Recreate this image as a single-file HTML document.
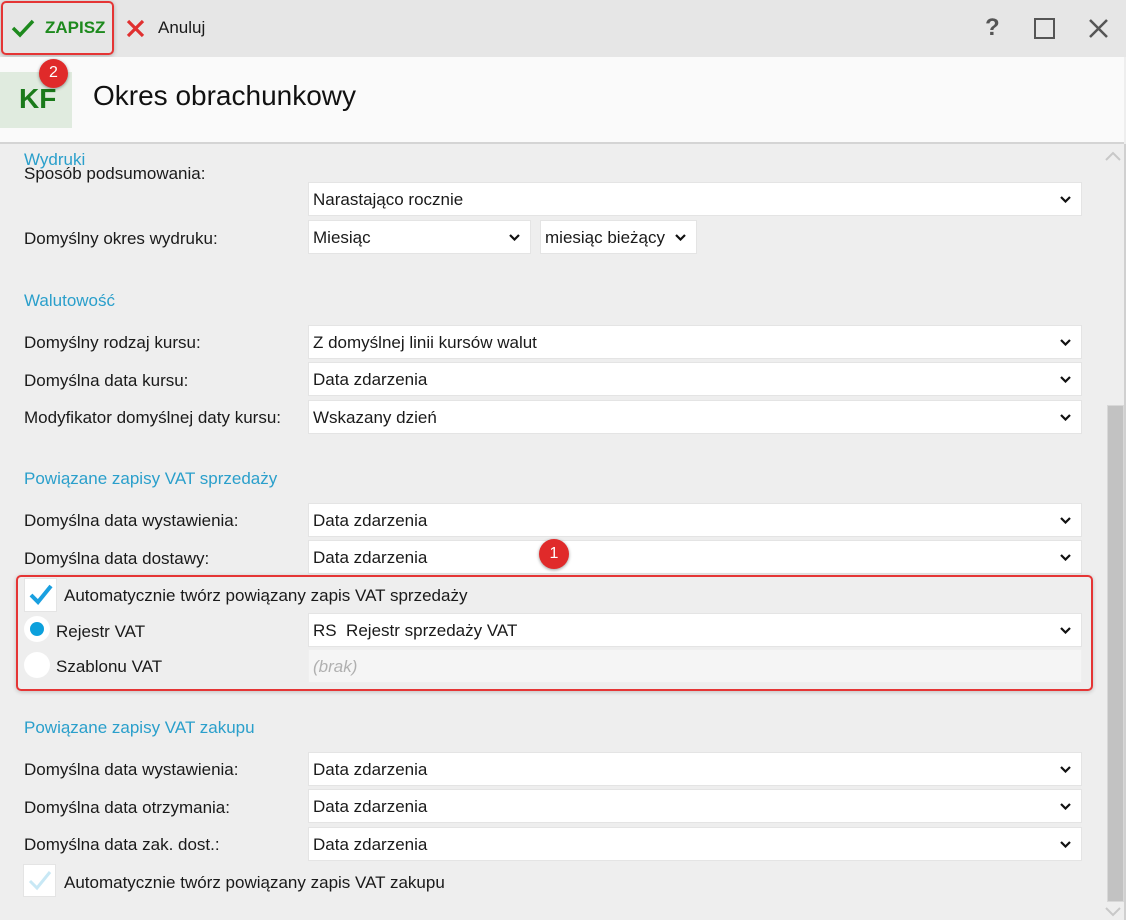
<!DOCTYPE html>
<html><head><meta charset="utf-8">
<style>
*{box-sizing:border-box;margin:0;padding:0}
body{width:1126px;height:920px;overflow:hidden;background:#eeeeee;font-family:"Segoe UI","Liberation Sans",sans-serif;font-size:17px;color:#1a1a1a;position:relative}
.a{position:absolute}
.top{left:0;top:0;width:1126px;height:57px;background:#e6e6e6}
.hdr{left:0;top:57px;width:1124px;height:87px;background:#fafafa;border-bottom:2px solid #d4d4d4}
.sec{color:#2a9fcb;font-size:17px}
.lbl{left:24px}
.f{background:#fff;border:1px solid #e4e4e4;height:34px;padding-left:4px;padding-top:1px;line-height:32px;white-space:nowrap}
.chev{position:absolute;right:10px;top:13px;width:11px;height:7px}
.rb{right:0;top:144px;width:2px;height:776px;background:#d0d0d0}
</style></head><body>
<div class="a top"></div>
<div class="a" style="left:1px;top:1px;width:113px;height:54px;border:2px solid #e53535;border-radius:5px;box-shadow:0 1px 4px rgba(0,0,0,.25)"></div>
<svg class="a" style="left:10px;top:18px" width="26" height="20" viewBox="0 0 26 20"><path d="M3 10 L10 17 L23 3" fill="none" stroke="#1e8a1e" stroke-width="3.5"/></svg>
<div class="a" style="left:45px;top:18px;color:#1e8a1e;font-weight:bold;font-size:17px">ZAPISZ</div>
<svg class="a" style="left:126px;top:19px" width="19" height="19" viewBox="0 0 19 19"><path d="M2 2 L17 17 M17 2 L2 17" stroke="#e03030" stroke-width="3.2"/></svg>
<div class="a" style="left:158px;top:18px">Anuluj</div>
<div class="a" style="left:985px;top:14px;font-size:24px;color:#555;font-weight:bold">?</div>
<div class="a" style="left:1034px;top:18px;width:21px;height:21px;border:2.5px solid #555"></div>
<svg class="a" style="left:1088px;top:18px" width="21" height="21" viewBox="0 0 21 21"><path d="M2 2 L19 19 M19 2 L2 19" stroke="#555" stroke-width="2.5"/></svg>
<div class="a hdr"></div>
<div class="a" style="left:0;top:72px;width:72px;height:56px;background:#e0ebdf"></div>
<div class="a" style="left:19px;top:83px;font-size:28px;color:#1a7a1a;font-weight:bold">KF</div>
<div class="a" style="left:93px;top:80px;font-size:28px;color:#111">Okres obrachunkowy</div>
<div class="a" style="left:39px;top:59px;width:29px;height:29px;border-radius:50%;background:#e02a2a;color:#fff;font-size:16px;text-align:center;line-height:28px;box-shadow:0 1px 3px rgba(0,0,0,.4)">2</div>
<div class="a rb"></div>
<svg class="a" style="left:1104px;top:150px" width="18" height="12"><path d="M2 10 L9 3 L16 10" fill="none" stroke="#c8c8c8" stroke-width="2"/></svg>
<div class="a" style="left:1107px;top:405px;width:17px;height:497px;background:#c2c2c2;border:1px solid #d8d8d8"></div>
<svg class="a" style="left:1104px;top:905px" width="18" height="12"><path d="M2 3 L9 10 L16 3" fill="none" stroke="#c8c8c8" stroke-width="2"/></svg>

<div class="a sec" style="left:24px;top:150px">Wydruki</div>
<div class="a lbl" style="top:164px">Sposób podsumowania:</div>
<div class="a f" style="left:308px;top:182px;width:774px">Narastająco rocznie<svg class="chev" viewBox="0 0 11 7"><path d="M1 1 L5.5 5.5 L10 1" fill="none" stroke="#111" stroke-width="2.2"/></svg></div>
<div class="a lbl" style="top:229px">Domyślny okres wydruku:</div>
<div class="a f" style="left:308px;top:220px;width:223px">Miesiąc<svg class="chev" viewBox="0 0 11 7"><path d="M1 1 L5.5 5.5 L10 1" fill="none" stroke="#111" stroke-width="2.2"/></svg></div>
<div class="a f" style="left:540px;top:220px;width:157px">miesiąc bieżący<svg class="chev" viewBox="0 0 11 7"><path d="M1 1 L5.5 5.5 L10 1" fill="none" stroke="#111" stroke-width="2.2"/></svg></div>

<div class="a sec" style="left:24px;top:291px">Walutowość</div>
<div class="a lbl" style="top:333px">Domyślny rodzaj kursu:</div>
<div class="a f" style="left:308px;top:325px;width:774px">Z domyślnej linii kursów walut<svg class="chev" viewBox="0 0 11 7"><path d="M1 1 L5.5 5.5 L10 1" fill="none" stroke="#111" stroke-width="2.2"/></svg></div>
<div class="a lbl" style="top:371px">Domyślna data kursu:</div>
<div class="a f" style="left:308px;top:362px;width:774px">Data zdarzenia<svg class="chev" viewBox="0 0 11 7"><path d="M1 1 L5.5 5.5 L10 1" fill="none" stroke="#111" stroke-width="2.2"/></svg></div>
<div class="a lbl" style="top:408px">Modyfikator domyślnej daty kursu:</div>
<div class="a f" style="left:308px;top:400px;width:774px">Wskazany dzień<svg class="chev" viewBox="0 0 11 7"><path d="M1 1 L5.5 5.5 L10 1" fill="none" stroke="#111" stroke-width="2.2"/></svg></div>

<div class="a sec" style="left:24px;top:469px">Powiązane zapisy VAT sprzedaży</div>
<div class="a lbl" style="top:511px">Domyślna data wystawienia:</div>
<div class="a f" style="left:308px;top:503px;width:774px">Data zdarzenia<svg class="chev" viewBox="0 0 11 7"><path d="M1 1 L5.5 5.5 L10 1" fill="none" stroke="#111" stroke-width="2.2"/></svg></div>
<div class="a lbl" style="top:549px">Domyślna data dostawy:</div>
<div class="a f" style="left:308px;top:540px;width:774px">Data zdarzenia<svg class="chev" viewBox="0 0 11 7"><path d="M1 1 L5.5 5.5 L10 1" fill="none" stroke="#111" stroke-width="2.2"/></svg></div>
<div class="a" style="left:539px;top:539px;width:30px;height:30px;border-radius:50%;background:#e02a2a;color:#fff;font-size:16px;text-align:center;line-height:29px;box-shadow:0 1px 3px rgba(0,0,0,.4)">1</div>

<div class="a" style="left:16px;top:575px;width:1077px;height:116px;border:2px solid #e53535;border-radius:5px;box-shadow:0 1px 4px rgba(0,0,0,.2)"></div>
<div class="a" style="left:24px;top:578px;width:33px;height:34px;background:#fff;border:1px solid #e4e4e4"></div>
<svg class="a" style="left:28px;top:583px" width="26" height="22" viewBox="0 0 26 22"><path d="M3 12 L10 19 L23 3" fill="none" stroke="#1aa0e0" stroke-width="4"/></svg>
<div class="a" style="left:64px;top:586px">Automatycznie twórz powiązany zapis VAT sprzedaży</div>
<div class="a" style="left:24px;top:616px;width:26px;height:26px;border-radius:50%;background:#fff"></div>
<div class="a" style="left:30px;top:622px;width:14px;height:14px;border-radius:50%;background:#0ca0dc"></div>
<div class="a" style="left:56px;top:622px">Rejestr VAT</div>
<div class="a f" style="left:308px;top:613px;width:774px">RS&nbsp; Rejestr sprzedaży VAT<svg class="chev" viewBox="0 0 11 7"><path d="M1 1 L5.5 5.5 L10 1" fill="none" stroke="#111" stroke-width="2.2"/></svg></div>
<div class="a" style="left:24px;top:652px;width:26px;height:26px;border-radius:50%;background:#fff"></div>
<div class="a" style="left:56px;top:657px">Szablonu VAT</div>
<div class="a f" style="left:308px;top:649px;width:774px;background:#f5f5f5;border-color:#efefef;color:#b0b0b0;font-style:italic">(brak)</div>

<div class="a sec" style="left:24px;top:718px">Powiązane zapisy VAT zakupu</div>
<div class="a lbl" style="top:760px">Domyślna data wystawienia:</div>
<div class="a f" style="left:308px;top:752px;width:774px">Data zdarzenia<svg class="chev" viewBox="0 0 11 7"><path d="M1 1 L5.5 5.5 L10 1" fill="none" stroke="#111" stroke-width="2.2"/></svg></div>
<div class="a lbl" style="top:798px">Domyślna data otrzymania:</div>
<div class="a f" style="left:308px;top:789px;width:774px">Data zdarzenia<svg class="chev" viewBox="0 0 11 7"><path d="M1 1 L5.5 5.5 L10 1" fill="none" stroke="#111" stroke-width="2.2"/></svg></div>
<div class="a lbl" style="top:835px">Domyślna data zak. dost.:</div>
<div class="a f" style="left:308px;top:827px;width:774px">Data zdarzenia<svg class="chev" viewBox="0 0 11 7"><path d="M1 1 L5.5 5.5 L10 1" fill="none" stroke="#111" stroke-width="2.2"/></svg></div>
<div class="a" style="left:23px;top:864px;width:33px;height:33px;background:#fff;border:1px solid #e4e4e4"></div>
<svg class="a" style="left:27px;top:869px" width="26" height="22" viewBox="0 0 26 22"><path d="M3 12 L10 19 L23 3" fill="none" stroke="#c8e8f5" stroke-width="3"/></svg>
<div class="a" style="left:64px;top:873px">Automatycznie twórz powiązany zapis VAT zakupu</div>
</body></html>
